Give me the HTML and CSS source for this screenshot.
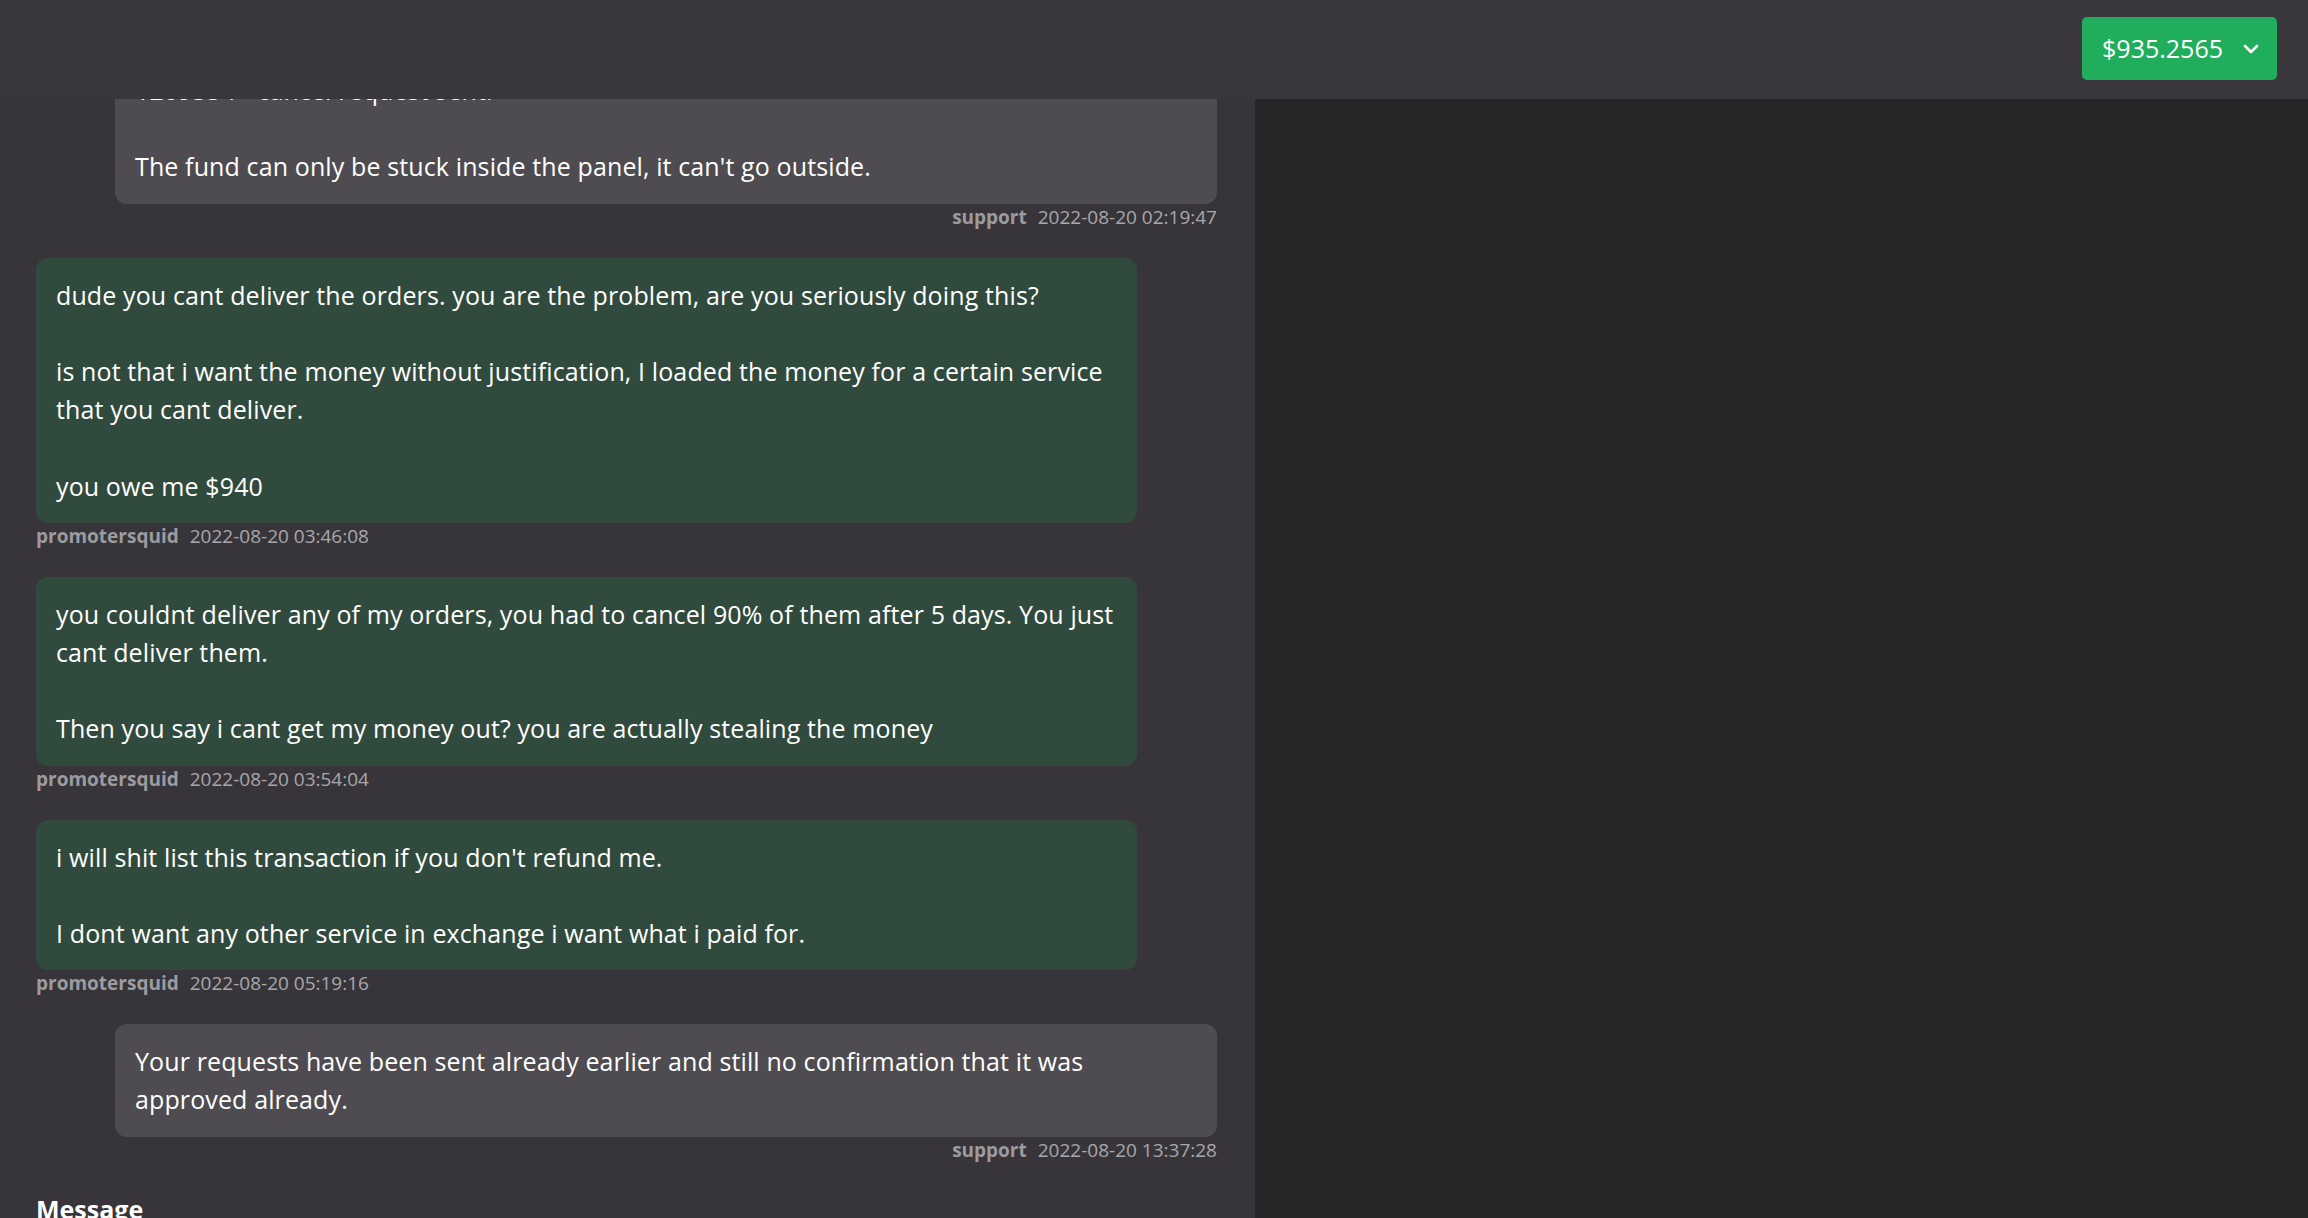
FILE: index.html
```html
<!DOCTYPE html>
<html lang="en">
<head>
<meta charset="utf-8">
<title>Ticket</title>
<link rel="stylesheet" href="styles.css">
</head>
<body>
<header class="topbar">
  <button class="balance" type="button">
    <span class="balance-amount">$935.2565</span>
    <svg class="balance-caret" width="16" height="10" viewBox="0 0 16 10" aria-hidden="true">
      <polyline points="2,2 8,8 14,2" fill="none" stroke="#ffffff" stroke-width="2.6" stroke-linecap="round" stroke-linejoin="round"/>
    </svg>
  </button>
</header>

<div class="layout">
  <main class="ticket">
    <div class="thread">
      <div class="msg msg-support">
        <div class="bubble">1209354 - cancel request sent.<br><br>The fund can only be stuck inside the panel, it can't go outside.</div>
        <div class="meta"><span class="meta-name">support</span><span class="meta-date">2022-08-20 02:19:47</span></div>
      </div>

      <div class="msg msg-user">
        <div class="bubble">dude you cant deliver the orders. you are the problem, are you seriously doing this?<br><br>is not that i want the money without justification, I loaded the money for a certain service that you cant deliver.<br><br>you owe me $940</div>
        <div class="meta"><span class="meta-name">promotersquid</span><span class="meta-date">2022-08-20 03:46:08</span></div>
      </div>

      <div class="msg msg-user">
        <div class="bubble">you couldnt deliver any of my orders, you had to cancel 90% of them after 5 days. You just cant deliver them.<br><br>Then you say i cant get my money out? you are actually stealing the money</div>
        <div class="meta"><span class="meta-name">promotersquid</span><span class="meta-date">2022-08-20 03:54:04</span></div>
      </div>

      <div class="msg msg-user">
        <div class="bubble">i will shit list this transaction if you don't refund me.<br><br>I dont want any other service in exchange i want what i paid for.</div>
        <div class="meta"><span class="meta-name">promotersquid</span><span class="meta-date">2022-08-20 05:19:16</span></div>
      </div>

      <div class="msg msg-support">
        <div class="bubble">Your requests have been sent already earlier and still no confirmation that it was approved already.</div>
        <div class="meta"><span class="meta-name">support</span><span class="meta-date">2022-08-20 13:37:28</span></div>
      </div>
    </div>

    <form class="reply">
      <label class="reply-label" for="reply-text">Message</label>
      <textarea id="reply-text" class="reply-text" rows="5"></textarea>
    </form>
  </main>
  <aside class="side"></aside>
</div>
</body>
</html>
```

FILE: styles.css
```css
* {
  box-sizing: border-box;
}

html,
body {
  margin: 0;
  height: 100%;
}

body {
  background: #37353a;
  color: #ffffff;
  font-family: "Open Sans", "Noto Sans", sans-serif;
  overflow: hidden;
}

.topbar {
  position: fixed;
  top: 0;
  left: 0;
  right: 0;
  height: 99px;
  z-index: 10;
  background: #39373c;
  display: flex;
  align-items: center;
  justify-content: flex-end;
  padding: 0 31px 2px 0;
}

.balance {
  display: flex;
  align-items: center;
  gap: 20px;
  height: 63px;
  padding: 0 18px 0 20px;
  border: 0;
  border-radius: 5px;
  background: #20ae5c;
  color: #ffffff;
  font-family: inherit;
  font-size: 25px;
  cursor: pointer;
}

.balance-amount {
  line-height: 1;
}

.balance-caret {
  display: block;
}

.layout {
  display: grid;
  grid-template-columns: 1255px 1fr;
  height: 100vh;
}

.ticket {
  padding: 53px 38px 0 36px;
  overflow: hidden;
}

.side {
  background: #262628;
}

.thread {
  display: flex;
  flex-direction: column;
  gap: 28px;
}

.msg {
  display: flex;
  flex-direction: column;
}

.msg-user {
  margin-right: 80px;
}

.msg-support {
  margin-left: 79px;
}

.bubble {
  padding: 18px 20px;
  border-radius: 12px;
  font-size: 25px;
  line-height: 38.2px;
  letter-spacing: 0.12px;
}

.msg-user .bubble {
  background: #314a3e;
}

.msg-support .bubble {
  background: #4e4c51;
}

.meta {
  display: flex;
  gap: 11px;
  font-size: 19px;
  line-height: 26px;
}

.msg-support .meta {
  justify-content: flex-end;
}

.meta-name {
  font-weight: 700;
  color: #9c9ba0;
}

.meta-date {
  color: #a8a7ac;
}

.reply {
  margin-top: 28px;
  display: flex;
  flex-direction: column;
  gap: 10px;
}

.reply-label {
  font-size: 25px;
  font-weight: 700;
  line-height: 36px;
}

.reply-text {
  background: #2c2a2f;
  border: 1px solid #4e4c51;
  border-radius: 8px;
  color: #ffffff;
  font: inherit;
  resize: none;
}
```
